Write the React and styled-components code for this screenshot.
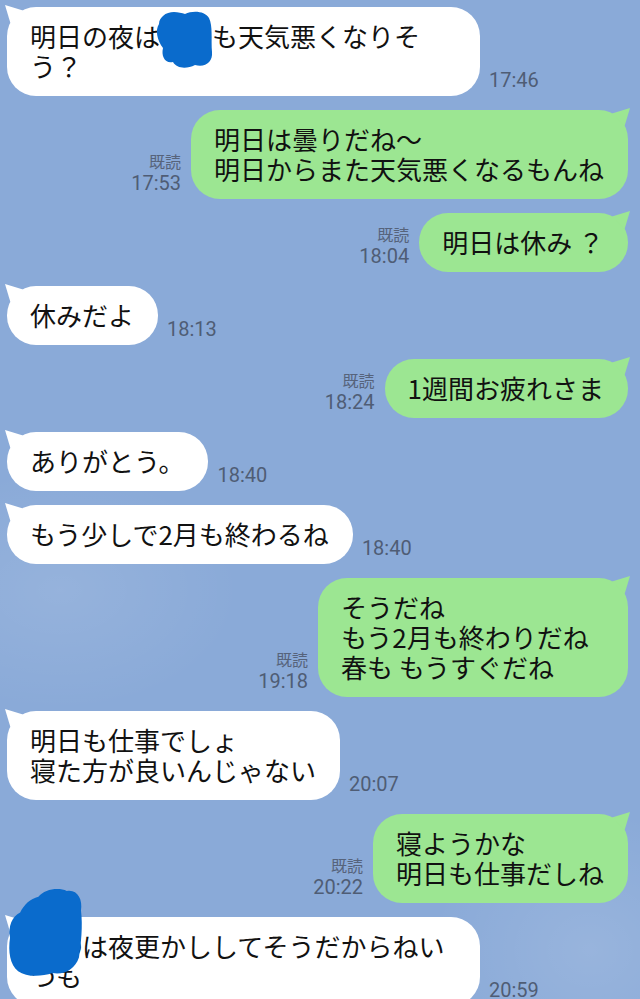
import React from "react";
import styled, { createGlobalStyle } from "styled-components";

const GlobalStyle = createGlobalStyle`
  html, body {
    margin: 0;
    padding: 0;
    background: #8aaad8;
  }
  body {
    font-family: "Noto Sans CJK JP", "Noto Sans", sans-serif;
    overflow: hidden;
  }
`;

const Screen = styled.div`
  width: 640px;
  height: 999px;
  box-sizing: border-box;
  padding: 7px 12px 0 7px;
  display: flex;
  flex-direction: column;
  gap: 14px;
  overflow: hidden;
  background:
    radial-gradient(ellipse 180px 120px at 60px 590px, rgba(255, 255, 255, 0.1), transparent),
    radial-gradient(ellipse 160px 140px at 590px 950px, rgba(255, 255, 255, 0.12), transparent),
    #8aaad8;
`;

const Row = styled.div`
  display: flex;
  align-items: flex-end;
  justify-content: ${(p) => (p.$mine ? "flex-end" : "flex-start")};
  gap: ${(p) => (p.$mine ? "10px" : "9px")};
`;

const Bubble = styled.div`
  position: relative;
  box-sizing: border-box;
  max-width: 473px;
  min-width: ${(p) => (p.$minWidth ? `${p.$minWidth}px` : "0")};
  padding: 14px 24px 15px 23px;
  border-radius: 29px;
  background: ${(p) => (p.$mine ? "#9ce692" : "#ffffff")};
  color: #111;
  font-size: 26px;
  line-height: 30px;
  white-space: pre-wrap;
  line-break: strict;

  &::before {
    content: "";
    position: absolute;
    top: -2px;
    width: 18px;
    height: 18px;
    background: inherit;
    ${(p) =>
      p.$mine
        ? `right: -2px; clip-path: polygon(100% 0, 0 30%, 70% 100%);`
        : `left: -2px; clip-path: polygon(0 0, 100% 30%, 30% 100%);`}
  }
`;

const Meta = styled.div`
  display: flex;
  flex-direction: column;
  align-items: flex-end;
  margin-bottom: 4px;
  flex-shrink: 0;
`;

const Read = styled.span`
  font-family: "Noto Sans CJK JP", sans-serif;
  font-size: 16px;
  line-height: 20px;
  color: #56637b;
`;

const Time = styled.span`
  font-family: Roboto, "Noto Sans", sans-serif;
  font-size: 20px;
  line-height: 24px;
  color: #4f5d75;
`;

const Redact = styled.span`
  position: relative;
`;

const Blob = styled.svg`
  position: absolute;
  left: ${(p) => p.$x}px;
  top: ${(p) => p.$y}px;
  width: ${(p) => p.$w}px;
  height: ${(p) => p.$h}px;
  pointer-events: none;
`;

function BlobSmall() {
  return (
    <Blob $x={-5} $y={-7} $w={58} $h={59} viewBox="0 0 58 59">
      <path
        fill="#0a6bcc"
        d="M8,6 C14,0 24,2 30,4 C38,0 50,1 54,8 C58,16 56,30 57,42 C58,52 50,58 40,55 C32,59 22,59 18,52 C10,54 6,46 8,38 C2,30 0,20 4,14 C4,10 6,8 8,6 Z"
      />
    </Blob>
  );
}

function BlobLarge() {
  return (
    <Blob $x={-22} $y={-40} $w={75} $h={90} viewBox="0 0 74 92" preserveAspectRatio="none">
      <path
        fill="#0a6bcc"
        d="M30,10 C36,2 50,0 58,4 C68,2 74,12 72,24 C74,40 72,58 70,72 C66,84 56,90 44,88 C32,92 18,92 10,86 C2,80 0,66 2,52 C0,40 4,30 12,26 C16,18 22,12 30,10 Z"
      />
    </Blob>
  );
}

function Incoming({ time, children }) {
  return (
    <Row>
      <Bubble>{children}</Bubble>
      <Meta>
        <Time>{time}</Time>
      </Meta>
    </Row>
  );
}

function Outgoing({ time, minWidth, children }) {
  return (
    <Row $mine>
      <Meta>
        <Read>既読</Read>
        <Time>{time}</Time>
      </Meta>
      <Bubble $mine $minWidth={minWidth}>
        {children}
      </Bubble>
    </Row>
  );
}

export default function App() {
  return (
    <>
      <GlobalStyle />
      <Screen>
        <Incoming time="17:46">
          明日の夜は
          <Redact>
            〇〇
            <BlobSmall />
          </Redact>
          も天気悪くなりそう？
        </Incoming>
        <Outgoing time="17:53">{"明日は曇りだね～\n明日からまた天気悪くなるもんね"}</Outgoing>
        <Outgoing time="18:04">明日は休み ？</Outgoing>
        <Incoming time="18:13">休みだよ</Incoming>
        <Outgoing time="18:24">1週間お疲れさま</Outgoing>
        <Incoming time="18:40">ありがとう。</Incoming>
        <Incoming time="18:40">もう少しで2月も終わるね</Incoming>
        <Outgoing time="19:18" minWidth={310}>
          {"そうだね\nもう2月も終わりだね\n春も もうすぐだね"}
        </Outgoing>
        <Incoming time="20:07">{"明日も仕事でしょ\n寝た方が良いんじゃない"}</Incoming>
        <Outgoing time="20:22">{"寝ようかな\n明日も仕事だしね"}</Outgoing>
        <Incoming time="20:59">
          <Redact>
            〇〇
            <BlobLarge />
          </Redact>
          は夜更かししてそうだからねいつも
        </Incoming>
      </Screen>
    </>
  );
}
